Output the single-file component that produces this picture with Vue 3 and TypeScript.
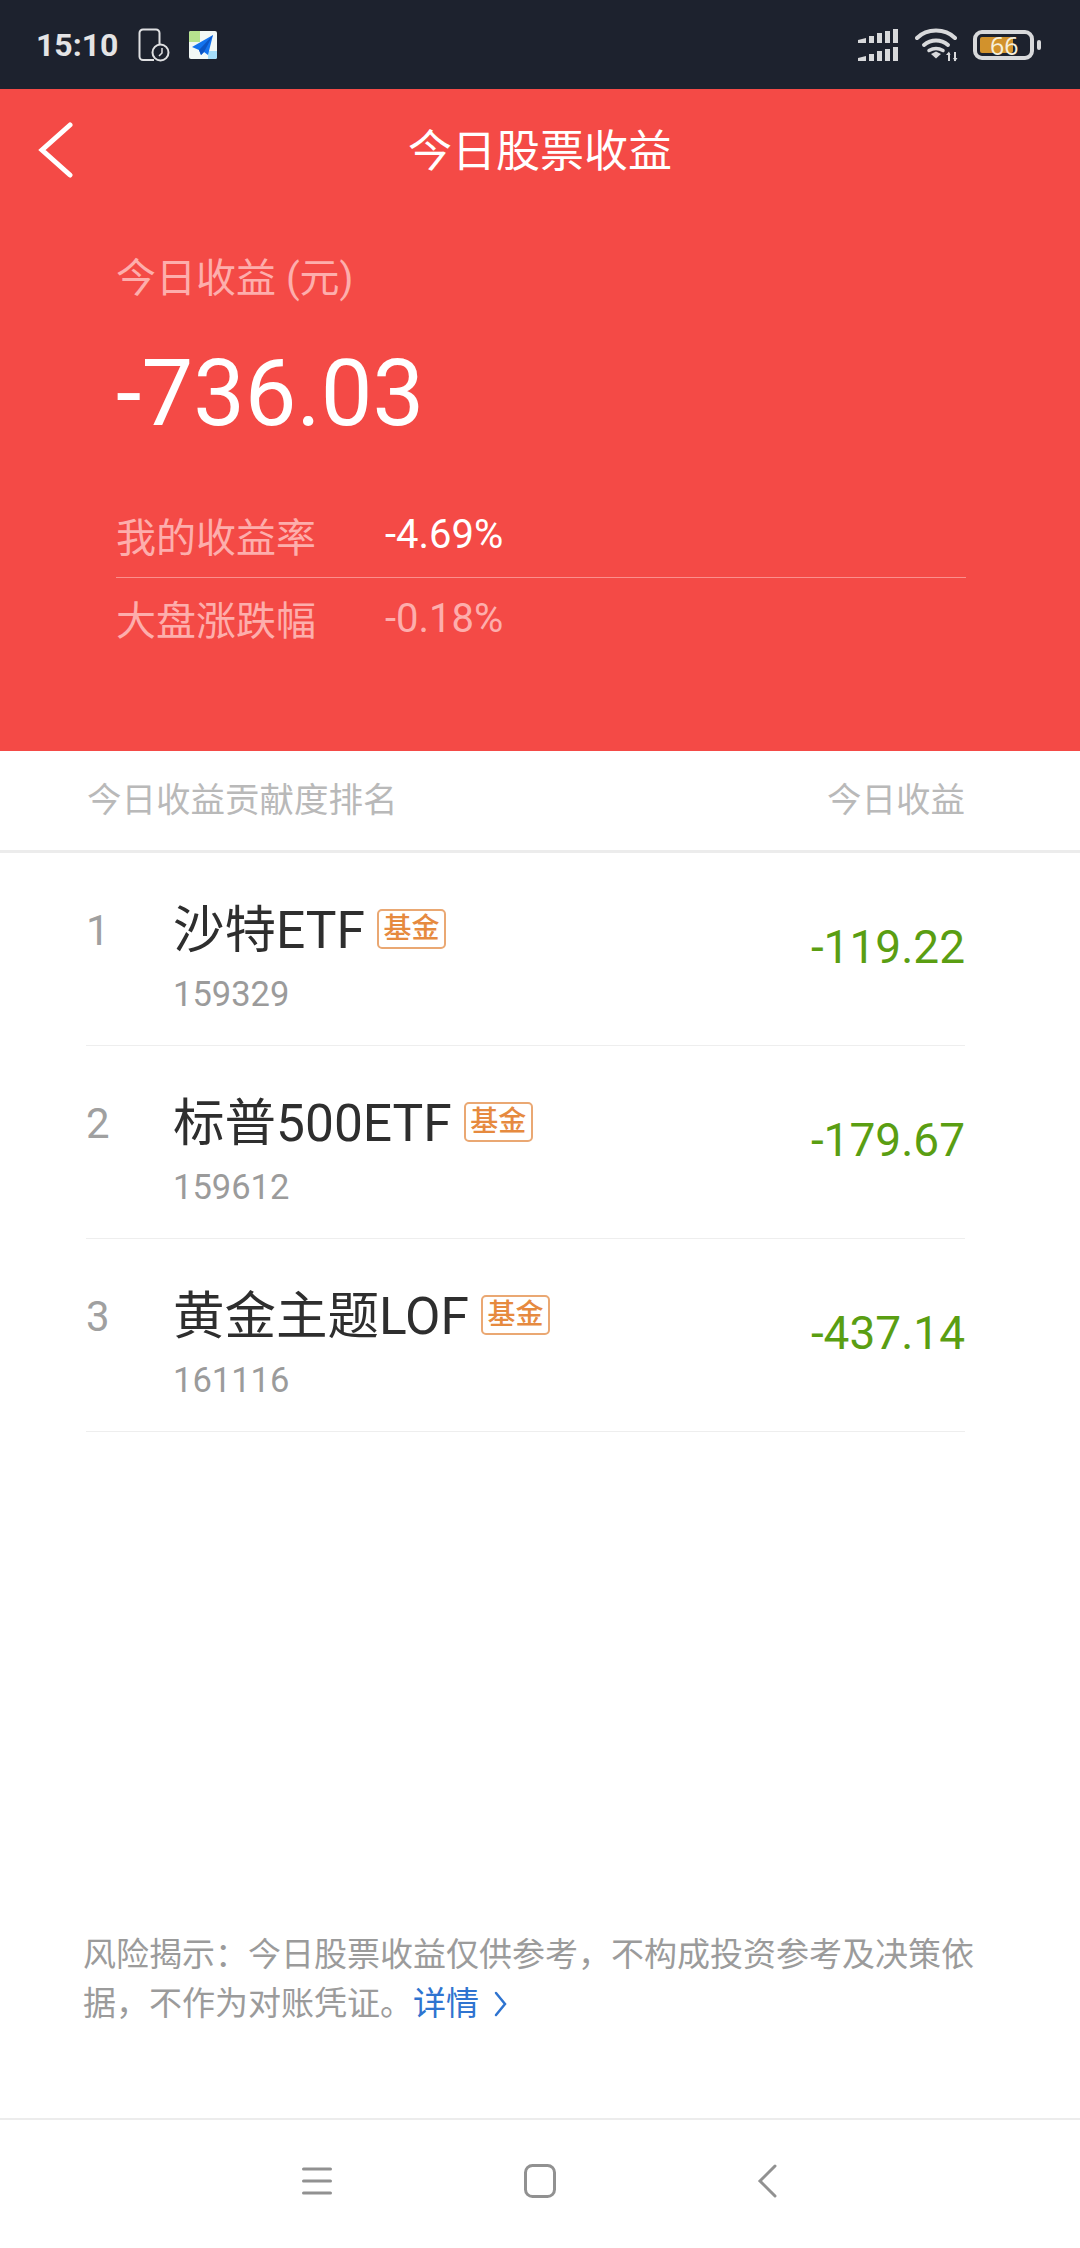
<template>
  <div class="page">
    <div class="status-bar">
      <span class="clock">15:10</span>
      <svg width="32" height="34" viewBox="0 0 32 34" fill="none" stroke="#dfe0e2" stroke-width="2">
        <path d="M16 32H5a3.500 3.500 0 0 1-3.500-3.500V5A3.500 3.500 0 0 1 5 1.500h13A3.500 3.500 0 0 1 21.500 5v11" />
        <circle cx="22.500" cy="24.500" r="8" />
        <path d="M24 20V25L21 28" stroke-width="1.500" />
      </svg>
      <svg class="map-icon" width="28" height="28" viewBox="0 0 28 28">
        <rect width="28" height="28" rx="2" fill="#f2f8f5" />
        <path d="M0 2a2 2 0 0 1 2-2h9v11H0z" fill="#b6e38e" />
        <path d="M19 20h9v6a2 2 0 0 1-2 2h-7z" fill="#a5defa" />
        <path d="M24 4 3 16l7 3 2 5 3-3 4 3z" fill="#1473ee" />
        <path d="M24 4 10 19l2 5 3-3z" fill="#0c55c4" />
      </svg>
      <div class="sb-right">
        <svg width="42" height="32" viewBox="0 0 42 32" fill="#d8d9db">
          <path d="M0 11l8-2v5H0zM11 7h5v7h-5zM19 4h5v10h-5zM27 2h5v12h-5zM35 0h5v14h-5z" />
          <path d="M0 29l8-2v5H0zM11 25h5v7h-5zM19 22h5v10h-5zM27 20h5v12h-5zM35 18h5v14h-5z" />
        </svg>
        <svg width="43" height="34" viewBox="0 0 43 34" fill="none" stroke="#d8d9db" stroke-width="4" stroke-linecap="round">
          <path d="M2 10C12 0 30 0 40 10" />
          <path d="M9 17c7-6 17-6 24 0" />
          <path d="M14 22.500c5-3 9-3 14 0" stroke-width="3.500" />
          <path d="M16 26l5-2.500 5 2.500-5 4.500z" fill="#d8d9db" stroke="none" />
          <path d="M34 25v8M40 24v9" stroke-width="2" stroke-linecap="butt" />
          <path d="M31 27l3-3.500 1.500 3.500zM38 30l2 3.500 2.500-3.500z" fill="#d8d9db" stroke="none" />
        </svg>
        <div class="battery">
          <div class="battery-body">
            <div class="battery-fill"></div>
            <span class="battery-num">66</span>
          </div>
          <div class="battery-cap"></div>
        </div>
      </div>
    </div>

    <div class="hero">
      <div class="nav">
        <svg class="back" width="36" height="56" viewBox="0 0 36 56" fill="none" stroke="#fff" stroke-width="5" stroke-linecap="round">
          <path d="M33 3 5 28l28 25" />
        </svg>
        <span class="nav-title">今日股票收益</span>
      </div>
      <div class="hero-body">
        <div class="hero-label">今日收益 (元)</div>
        <div class="hero-amount">-736.03</div>
        <div class="rate-row rate-row-first">
          <span class="rate-label">我的收益率</span>
          <span class="rate-value">-4.69%</span>
        </div>
        <div class="rate-row">
          <span class="rate-label">大盘涨跌幅</span>
          <span class="rate-value muted">-0.18%</span>
        </div>
      </div>
    </div>

    <div class="list-head">
      <span>今日收益贡献度排名</span>
      <span>今日收益</span>
    </div>

    <div class="list">
      <div v-for="(item, i) in items" :key="item.code" class="row">
        <span class="rank">{{ i + 1 }}</span>
        <div class="row-info">
          <div class="row-name">
            <span>{{ item.name }}</span>
            <span class="tag">基金</span>
          </div>
          <div class="row-code">{{ item.code }}</div>
        </div>
        <span class="row-value">{{ item.value }}</span>
      </div>
    </div>

    <p class="risk">
      风险揭示：今日股票收益仅供参考，不构成投资参考及决策依据，不作为对账凭证。<span class="link">详情</span><svg class="link-arrow" width="13" height="26" viewBox="0 0 13 26" fill="none" stroke="#2f74d0" stroke-width="2.500" stroke-linecap="round">
        <path d="M2 2l9 11-9 11" />
      </svg>
    </p>

    <div class="bottom-nav">
      <svg width="30" height="30" viewBox="0 0 30 30" fill="none" stroke="#919191" stroke-width="3" stroke-linecap="round">
        <path d="M1.500 3h27M1.500 15h27M1.500 27h27" />
      </svg>
      <svg class="nav-home" width="32" height="34" viewBox="0 0 32 34" fill="none" stroke="#919191" stroke-width="3">
        <rect x="1.500" y="1.500" width="29" height="31" rx="7" />
      </svg>
      <svg class="nav-back" width="20" height="34" viewBox="0 0 20 34" fill="none" stroke="#919191" stroke-width="3" stroke-linecap="round">
        <path d="M18 2 3 17l15 15" />
      </svg>
    </div>
  </div>
</template>

<script setup lang="ts">
interface StockItem {
  name: string
  code: string
  value: string
}

const items: StockItem[] = [
  { name: '沙特ETF', code: '159329', value: '-119.22' },
  { name: '标普500ETF', code: '159612', value: '-179.67' },
  { name: '黄金主题LOF', code: '161116', value: '-437.14' }
]
</script>

<style>
html,
body {
  margin: 0;
  background: #fff;
}
</style>

<style scoped>
.page {
  width: 1080px;
  height: 2248px;
  display: flex;
  flex-direction: column;
  overflow: hidden;
  background: #fff;
  font-family: Roboto, "Noto Sans CJK SC", sans-serif;
}

.status-bar {
  height: 89px;
  flex-shrink: 0;
  display: flex;
  align-items: center;
  padding: 0 39px 0 36px;
  background: #1d222e;
  box-sizing: border-box;
}

.clock {
  font-size: 32px;
  font-weight: 700;
  color: #e4e4e5;
  margin-right: 20px;
}

.map-icon {
  margin-left: 19px;
}

.sb-right {
  margin-left: auto;
  display: flex;
  align-items: center;
  gap: 15px;
}

.battery {
  display: flex;
  align-items: center;
  gap: 3px;
}

.battery-body {
  position: relative;
  width: 61px;
  height: 30px;
  border: 4px solid #d8d9db;
  border-radius: 9px;
  box-sizing: border-box;
  padding: 3px;
}

.battery-fill {
  width: 33px;
  height: 16px;
  background: #d2922c;
  border-radius: 2px;
}

.battery-num {
  position: absolute;
  top: -4px;
  left: 13px;
  font-size: 25px;
  line-height: 30px;
  color: #f6efdc;
  font-family: "Open Sans", sans-serif;
}

.battery-cap {
  width: 4px;
  height: 10px;
  background: #d8d9db;
  border-radius: 2px;
}

.hero {
  height: 662px;
  flex-shrink: 0;
  background: #f44a46;
  box-sizing: border-box;
}

.nav {
  position: relative;
  height: 122px;
  padding-bottom: 4px;
  box-sizing: border-box;
  display: flex;
  align-items: center;
  justify-content: center;
}

.back {
  position: absolute;
  left: 37px;
  top: 33px;
}

.nav-title {
  font-size: 44px;
  color: #fff;
}

.hero-body {
  padding: 43px 114px 0 116px;
}

.hero-label {
  font-size: 40px;
  line-height: 50px;
  color: #fdaeac;
}

.hero-amount {
  font-size: 92px;
  line-height: 112px;
  margin-top: 34px;
  color: #fff;
}

.rate-row {
  display: flex;
  align-items: center;
  height: 80px;
}

.rate-row-first {
  margin-top: 42px;
  border-bottom: 1px solid #fb8f8c;
  height: 86px;
  box-sizing: border-box;
}

.rate-label {
  width: 269px;
  font-size: 40px;
  color: #fdaeac;
}

.rate-value {
  font-size: 40px;
  color: #fff;
}

.rate-value.muted {
  color: #fdaeac;
}

.list-head {
  height: 102px;
  flex-shrink: 0;
  box-sizing: border-box;
  display: flex;
  align-items: center;
  justify-content: space-between;
  padding: 0 115px 7px 87px;
  border-bottom: 3px solid #ececec;
  font-size: 34.500px;
  color: #b9b9b9;
}

.list {
  padding: 0 115px 0 86px;
}

.row {
  height: 193px;
  box-sizing: border-box;
  display: flex;
  align-items: flex-start;
  border-bottom: 1px solid #eeeeee;
}

.rank {
  width: 87px;
  padding-top: 55px;
  font-size: 42px;
  line-height: 46px;
  color: #a0a0a0;
}

.row-info {
  padding-top: 46px;
}

.row-name {
  display: flex;
  align-items: center;
  gap: 12px;
  font-size: 51.500px;
  line-height: 64px;
  color: #2e2e2e;
}

.tag {
  width: 69px;
  height: 40px;
  box-sizing: border-box;
  display: flex;
  align-items: center;
  justify-content: center;
  margin-top: -4px;
  border: 2px solid #eaa873;
  border-radius: 5px;
  font-size: 28px;
  font-weight: 500;
  color: #e68a3f;
}

.row-code {
  margin-top: 11px;
  font-size: 34.500px;
  line-height: 40px;
  color: #9b9b9b;
}

.row-value {
  margin-left: auto;
  padding-top: 67px;
  font-size: 46px;
  line-height: 54px;
  color: #5a9e12;
}

.risk {
  margin: auto 0 0;
  padding: 0 83px;
  width: 1080px;
  box-sizing: border-box;
  font-size: 33px;
  line-height: 49px;
  color: #9b9b9b;
}

.link {
  color: #2f74d0;
}

.link-arrow {
  margin-left: 15px;
  vertical-align: -2px;
}

.bottom-nav {
  margin-top: 90px;
  height: 130px;
  flex-shrink: 0;
  box-sizing: border-box;
  border-top: 2px solid #ececec;
  display: flex;
  align-items: center;
  padding: 0 0 6px 302px;
}

.nav-home {
  margin-left: 192px;
}

.nav-back {
  margin-left: 201px;
}
</style>
